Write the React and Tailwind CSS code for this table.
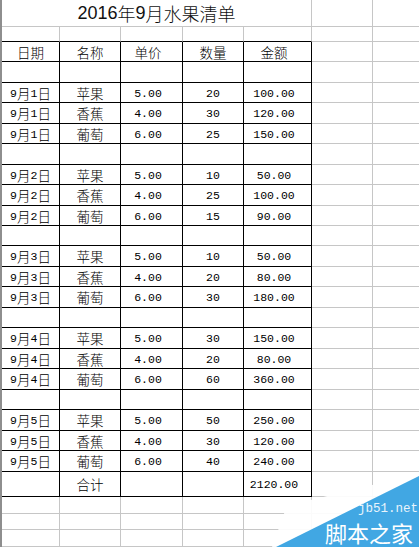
import React from "react";

const W = ["w-[58px]", "w-[61px]", "w-[62px]", "w-[61px]", "w-[68px]", "w-[61px]", "flex-1"];
const R = { k: "border-r border-r-black", g: "border-r border-r-[#c6c6c6]", n: "" };
const B = { k: "border-b border-b-black", g: "border-b border-b-[#c6c6c6]", n: "" };

const days = [
  { d: "9月1日", items: [["20", "100.00"], ["30", "120.00"], ["25", "150.00"]] },
  { d: "9月2日", items: [["10", "50.00"], ["25", "100.00"], ["15", "90.00"]] },
  { d: "9月3日", items: [["10", "50.00"], ["20", "80.00"], ["30", "180.00"]] },
  { d: "9月4日", items: [["30", "150.00"], ["20", "80.00"], ["60", "360.00"]] },
  { d: "9月5日", items: [["50", "250.00"], ["30", "120.00"], ["40", "240.00"]] },
];
const fruits = [["苹果", "5.00"], ["香蕉", "4.00"], ["葡萄", "6.00"]];

// split mixed text: CJK runs in a CJK font, the rest in a narrow mono font
const Txt = ({ s }) =>
  s.split(/([\u4e00-\u9fff]+)/).filter(Boolean).map((p, i) =>
    /[\u4e00-\u9fff]/.test(p) ? (
      <span key={i} className="font-['Noto_Sans_CJK_SC',sans-serif] font-light text-[13.5px]">{p}</span>
    ) : (
      <span key={i} className="font-['Liberation_Mono',monospace] text-[11.5px]">{p}</span>
    )
  );

const Cell = ({ i, r, b, pad, children }) => (
  <div className={`${W[i]} ${R[r]} ${B[b]} h-full flex items-center justify-center pt-[2px] leading-none text-black ${pad ? "pr-[7px]" : ""}`}>
    {children && <Txt s={children} />}
  </div>
);

// a row inside the bordered table, plus two plain gridline columns on the right
const TableRow = ({ h = "h-[21px]", cells = [] }) => (
  <div className={`flex ${h}`}>
    {[0, 1, 2, 3, 4].map(i => (
      <Cell key={i} i={i} r="k" b="k" pad={i === 2 || i === 4}>{cells[i]}</Cell>
    ))}
    <Cell i={5} r="g" b="g" />
    <Cell i={6} r="n" b="g" />
  </div>
);

const PlainRow = ({ h }) => (
  <div className={`flex ${h}`}>
    {[0, 1, 2, 3, 4, 5].map(i => (
      <Cell key={i} i={i} r="g" b="g" />
    ))}
    <Cell i={6} r="n" b="g" />
  </div>
);

export default function App() {
  return (
    <div className="relative w-[419px] h-[547px] overflow-hidden bg-white flex">
      <div className="w-[2px] h-full bg-[#8e8e8e]" />
      <div className="flex-1 flex flex-col">
        {/* title row, merged A-E */}
        <div className="flex h-[27px]">
          <div className="w-[310px] h-full border-r border-r-[#c6c6c6] border-b border-b-[#c6c6c6] flex items-center justify-center pt-[1px] text-[#111]">
            <span className="font-['Liberation_Sans',sans-serif] text-[18px]">2016</span>
            <span className="font-['Noto_Sans_CJK_SC',sans-serif] font-light text-[18px]">年</span>
            <span className="font-['Liberation_Sans',sans-serif] text-[18px]">9</span>
            <span className="font-['Noto_Sans_CJK_SC',sans-serif] font-light text-[18px]">月水果清单</span>
          </div>
          <Cell i={5} r="g" b="g" />
          <Cell i={6} r="n" b="g" />
        </div>
        {/* spacer row above table */}
        <div className="flex h-[15px]">
          {[0, 1, 2, 3, 4].map(i => (
            <Cell key={i} i={i} r="g" b="k" />
          ))}
          <Cell i={5} r="g" b="g" />
          <Cell i={6} r="n" b="g" />
        </div>
        <TableRow cells={["日期", "名称", "单价", "数量", "金额"]} />
        {days.map(day => (
          <React.Fragment key={day.d}>
            <TableRow />
            {day.items.map(([q, amt], k) => (
              <TableRow key={k} cells={[day.d, fruits[k][0], fruits[k][1], q, amt]} />
            ))}
          </React.Fragment>
        ))}
        <TableRow h="h-[26px]" cells={["", "合计", "", "", "2120.00"]} />
        <PlainRow h="h-[17px]" />
        <PlainRow h="h-[17px]" />
        <PlainRow h="h-[17px]" />
      </div>

      {/* jb51 watermark */}
      <svg className="absolute left-[230px] top-[440px]" width="189" height="107" viewBox="0 0 189 107">
        <polygon points="42,107 50,85 56,68 81,60 142,45 163,42 189,32 189,107" fill="#ffffff" fillOpacity="0.92" />
        <polygon points="46,107 189,36 189,107" fill="#41a7e3" />
      </svg>
      <div className="absolute left-[358px] top-[503px] whitespace-nowrap font-['Liberation_Mono',monospace] text-[12.5px] leading-none text-[#e8f4fc]">
        jb51.net
      </div>
      <div className="absolute left-[325px] top-[521px] whitespace-nowrap font-['Noto_Sans_CJK_SC',sans-serif] text-[22px] leading-none text-white">
        脚本之家
      </div>
    </div>
  );
}
